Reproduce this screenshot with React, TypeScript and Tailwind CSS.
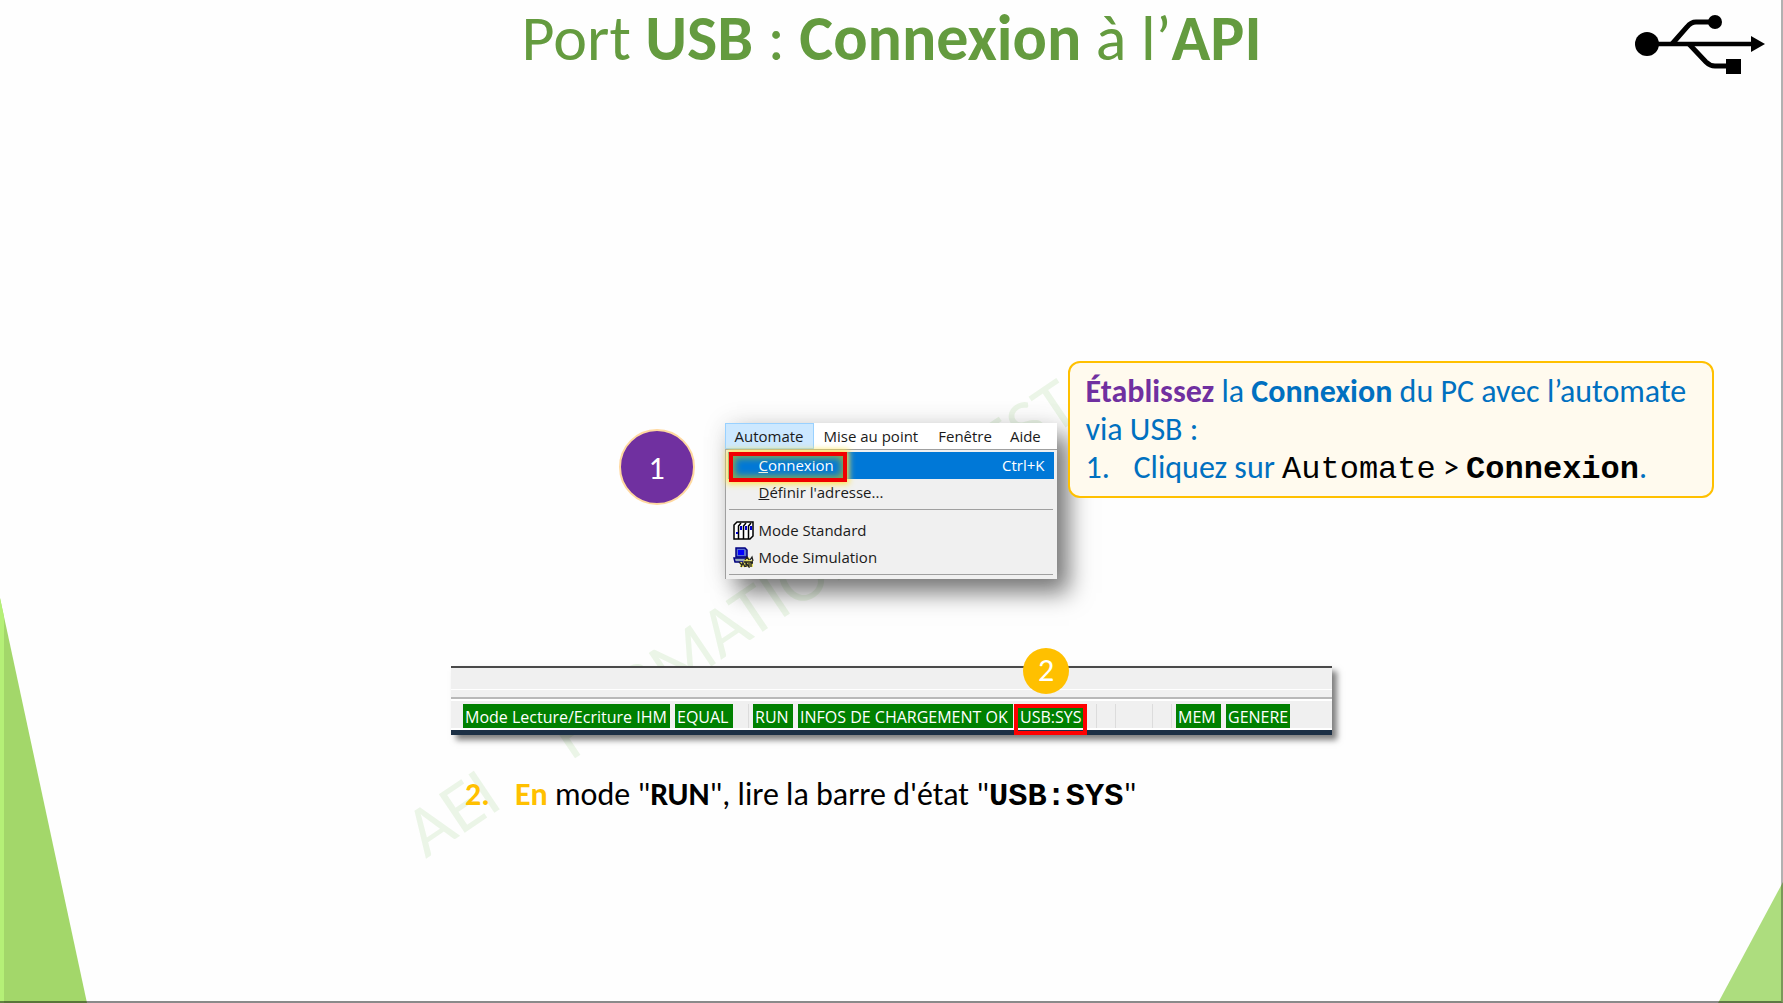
import type { ReactNode } from 'react'

function UsbLogo() {
  return (
    <svg viewBox="0 0 132 60" className="w-[132px] h-[60px]" role="img" aria-label="USB">
      <circle cx="13" cy="29" r="12" />
      <circle cx="81" cy="7" r="7" />
      <rect x="92" y="44" width="15" height="15" />
      <polygon points="117,21 131,29 117,37" />
      <g fill="none" stroke="#000" strokeWidth="5">
        <path d="M12 29H119" strokeWidth="4.5" />
        <path d="M38 29L53 12Q57 7 62 7H80" />
        <path d="M55 29L72 47Q76 51 81 51H94" />
      </g>
    </svg>
  )
}

function RackIcon() {
  return (
    <svg viewBox="0 0 21 19" className="w-[21px] h-[19px]" aria-hidden="true">
      <path d="M1 4L4 1H20V15L17 18H1Z" fill="#fff" stroke="#000" strokeWidth="1.5" />
      <path d="M5.5 18V5L8 2M10.5 18V5L13 2M15.5 18V5L18 2" fill="none" stroke="#000" strokeWidth="1.5" />
      <path d="M3 11h2v2H3zM7 5h2v4H7zM12 5h2v4h-2zM17 5h2v4h-2z" fill="#00c" />
    </svg>
  )
}

function SimulationIcon() {
  return (
    <svg viewBox="0 0 21 21" className="w-[21px] h-[21px]" aria-hidden="true">
      <path d="M3 1H12L14 3V10H3Z" fill="#5a6fd0" stroke="#000080" strokeWidth="1.5" />
      <rect x="5" y="3" width="6" height="5" fill="#00f" />
      <path d="M1 11H14L11 15H2Z" fill="#9ab" stroke="#000080" strokeWidth="1.5" />
      <path d="M7 20V15H9V17L12 12L14 10L17 11V14L20 12V20Z" fill="#e8e060" />
      <path d="M6 15L9 18M8 20L10 16L12 20M13 20V16L16 20V16M18 20V16H20M12 13L14 10L16 13M17 13L19 10L20 14M11 15H20" fill="none" stroke="#222" strokeWidth="1.3" />
    </svg>
  )
}

function MenuItem({ icon, children }: { icon?: ReactNode; children: ReactNode }) {
  return (
    <button className="flex h-[27px] w-full items-center text-left">
      <span className="flex w-[31px] shrink-0 justify-center">{icon}</span>
      <span className="pb-[2px]">{children}</span>
    </button>
  )
}

function AutomateMenu() {
  return (
    <div className="w-[332px] bg-[#f0f0f0] font-['Open_Sans',sans-serif] text-[15px] leading-5 text-[#1a1a1a] shadow-[12px_14px_22px_rgba(0,0,0,0.5),0_0_24px_rgba(0,0,0,0.1)]">
      <nav className="flex h-[26px] items-stretch bg-white">
        <button className="w-[89px] border border-[#99d1ff] bg-[#cce8ff]">Automate</button>
        <button className="ml-[10px]">Mise au point</button>
        <button className="ml-5">Fenêtre</button>
        <button className="ml-[18px]">Aide</button>
      </nav>
      <div className="border-l border-t border-[#a0a0a0] pl-[2px] pr-[3px] pt-[2px] pb-1">
        <div className="relative">
          <button className="flex h-[27px] w-full items-center bg-[#0078d7] pb-[2px] pl-[31px] pr-[9px] text-white">
            <span><u>C</u>onnexion</span>
            <span className="ml-auto">Ctrl+K</span>
          </button>
          <span className="pointer-events-none absolute left-px top-0 h-[30px] w-[118px] border-4 border-[#f00000] shadow-[0_0_6px_2px_#ffe44a,inset_0_0_7px_2px_#8fb04a]" />
        </div>
        <MenuItem><u>D</u>éfinir l'adresse...</MenuItem>
        <hr className="mx-px mb-[7px] mt-[3px] border-[#a0a0a0]" />
        <MenuItem icon={<RackIcon />}>Mode Standard</MenuItem>
        <MenuItem icon={<SimulationIcon />}>Mode Simulation</MenuItem>
        <hr className="mx-px mt-[3px] border-[#a0a0a0]" />
      </div>
    </div>
  )
}

function Chip({ className, children }: { className: string; children: ReactNode }) {
  return (
    <span className={`relative h-6 shrink-0 whitespace-nowrap bg-[#008000] pl-[2px] leading-[26px] text-white ${className}`}>
      {children}
    </span>
  )
}

function Divider({ className }: { className: string }) {
  return <span className={`h-6 w-px shrink-0 bg-[#dcdcdc] ${className}`} />
}

function StatusBar() {
  return (
    <div className="mx-auto w-[881px] border-b-[5px] border-t-2 border-b-[#1b2f45] border-t-[#4a4a4a] bg-[#f0f0f0] font-['Open_Sans',sans-serif] text-base shadow-[5px_5px_6px_rgba(0,0,0,0.5)]">
      <div className="h-[22px] border-b border-white" />
      <div className="h-[9px] border-b-2 border-[#b8b8b8]" />
      <div className="flex border-b-2 border-t-2 border-white pl-3 pt-[3px]">
        <Chip className="w-[207px]">Mode Lecture/Ecriture IHM</Chip>
        <Chip className="ml-[5px] w-[58px]">EQUAL</Chip>
        <Divider className="ml-[15px]" />
        <Chip className="ml-1 w-10">RUN</Chip>
        <Chip className="ml-[5px] w-[215px]">INFOS DE CHARGEMENT OK</Chip>
        <Chip className="ml-[5px] w-[66px]">
          USB:SYS
          <span className="absolute -left-1 top-0 h-[31px] w-[73px] border-4 border-[#f00]" />
          <span className="absolute -top-14 left-[5px] flex size-[46px] items-center justify-center rounded-full bg-[#ffc000] font-['Carlito','Lato',sans-serif] text-[32px]">
            2
          </span>
        </Chip>
        <Divider className="ml-3" />
        <Divider className="ml-[18px]" />
        <Divider className="ml-9" />
        <Divider className="ml-[18px]" />
        <Chip className="ml-1 w-[45px]">MEM</Chip>
        <Chip className="ml-[5px] w-16">GENERE</Chip>
      </div>
    </div>
  )
}

export default function App() {
  return (
    <main className="relative isolate min-h-screen overflow-hidden bg-[#fefefe] font-['Carlito','Lato',sans-serif] text-[32px] leading-[38px] text-black">
      {/* slide decoration */}
      <svg viewBox="0 0 87 405" className="absolute bottom-0 left-0 -z-10 h-[405px] w-[87px]" aria-hidden="true">
        <polygon points="0,0 87,405 0,405" fill="#a3d76a" />
        <polygon points="0,0 4,19 4,405 0,405" fill="#b5f077" />
      </svg>
      <svg viewBox="0 0 65 121" className="absolute bottom-0 right-0 -z-10 h-[121px] w-[65px]" aria-hidden="true">
        <polygon points="65,0 65,121 0,121" fill="#addd7e" />
      </svg>
      <div
        aria-hidden="true"
        className="absolute left-[432px] top-[796px] -z-10 flex origin-bottom-left rotate-[-34deg] whitespace-nowrap text-[72px] leading-[72px] text-[#ebf5e7]"
      >
        <span>AEI</span>
        <span className="ml-20">FORMATION</span>
        <span className="ml-[116px]">TEST</span>
      </div>
      <div className="pointer-events-none absolute inset-0 border-b-2 border-r-2 border-b-black/45 border-r-black/30" />

      <header className="grid grid-cols-[1fr_auto_1fr] items-start">
        <h1 className="col-start-2 text-[64px] leading-[76px] text-[#649b3f]">
          Port <b>USB</b> : <b>Connexion</b> à l’<b>API</b>
        </h1>
        <div className="justify-self-end pr-[17px] pt-[15px]"><UsbLogo /></div>
      </header>

      <section className="mt-[285px] grid grid-cols-[1fr_auto_1fr] items-start">
        <span className="mr-[30px] mt-[68px] flex size-[76px] items-center justify-center justify-self-end rounded-full border-2 border-[#ffd9a0] bg-[#7030a0] pt-1 text-white">
          1
        </span>
        <div className="mt-[62px] pr-[2px]"><AutomateMenu /></div>
        <div className="relative ml-[9px] mr-[69px] rounded-xl border-2 border-[#ffc000] bg-[#fffaee] pb-[7px] pl-4 pr-4 pt-[10px] text-[#0070c0]">
          <p><b className="text-[#7030a0]">Établissez</b> la <b>Connexion</b> du PC avec l’automate via USB :</p>
          <div className="flex">
            <span className="w-12 shrink-0">1.</span>
            <p className="whitespace-nowrap">
              Cliquez sur{' '}
              <span className="text-black">
                <span className="font-['Liberation_Mono',monospace]">Automate</span>
                {' > '}
                <b className="font-['Liberation_Mono',monospace]">Connexion</b>
              </span>
              .
            </p>
          </div>
        </div>
      </section>

      <section className="mt-[87px]">
        <StatusBar />
        <div className="mx-auto mt-[41px] flex w-[881px] pl-[14px]">
          <b className="w-[50px] shrink-0 text-[#ffc000]">2.</b>
          <p className="whitespace-nowrap">
            <b className="text-[#ffc000]">En</b> mode "<b>RUN</b>", lire la barre d'état "
            <b className="font-['Liberation_Mono',monospace]">USB:SYS</b>"
          </p>
        </div>
      </section>
    </main>
  )
}
